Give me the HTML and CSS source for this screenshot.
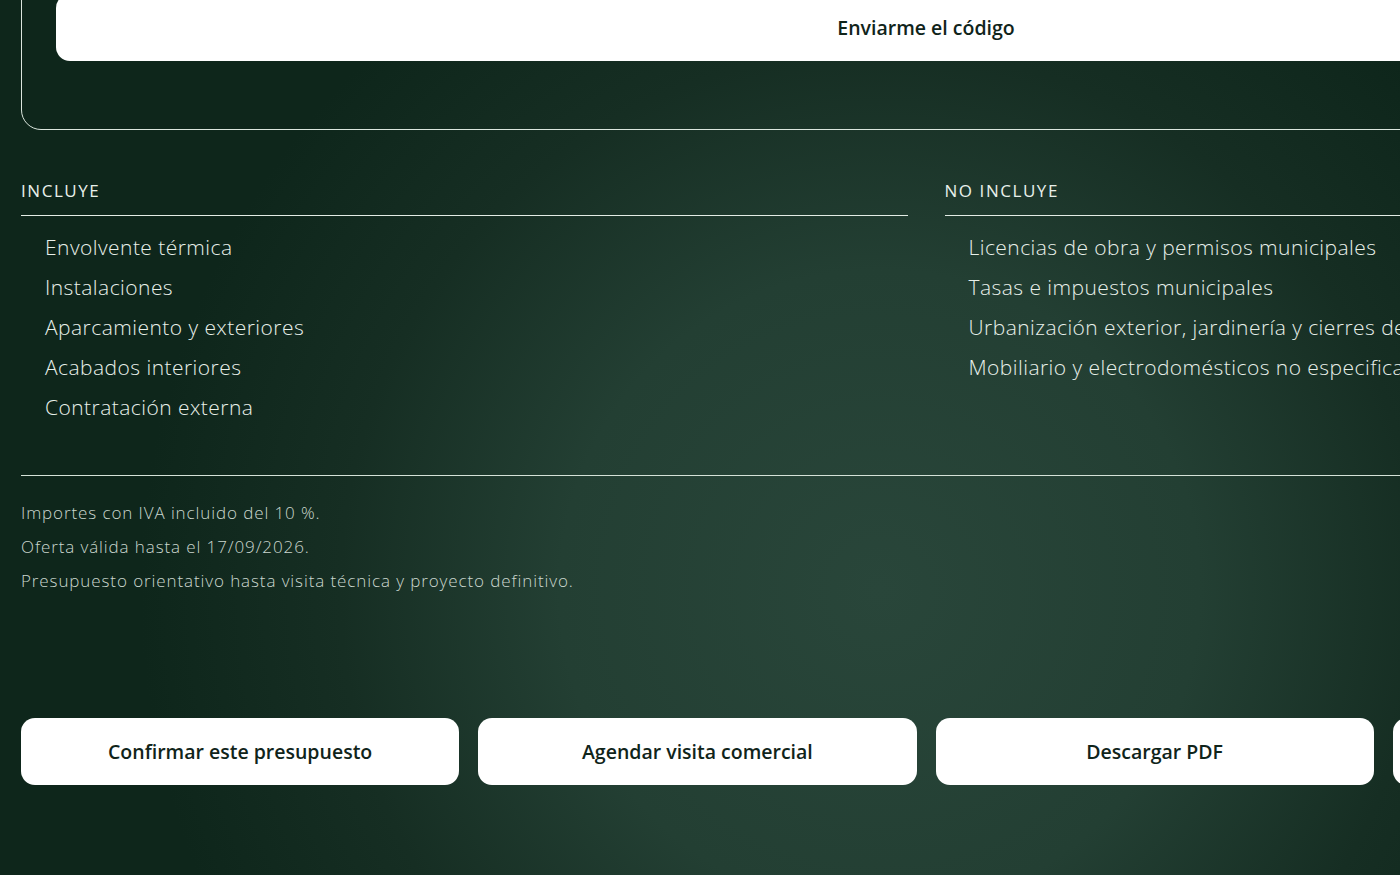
FILE: index.html
```html
<!DOCTYPE html>
<html lang="es">
<head>
<meta charset="utf-8">
<title>Presupuesto</title>
<link rel="stylesheet" href="styles.css">
</head>
<body>
<div class="page">
  <section class="code-box">
    <button class="btn btn-wide">Enviarme el código</button>
  </section>

  <section class="scope">
    <div class="scope-col">
      <h3 class="scope-title">INCLUYE</h3>
      <ul class="scope-list">
        <li>Envolvente térmica</li>
        <li>Instalaciones</li>
        <li>Aparcamiento y exteriores</li>
        <li>Acabados interiores</li>
        <li>Contratación externa</li>
      </ul>
    </div>
    <div class="scope-col">
      <h3 class="scope-title">NO INCLUYE</h3>
      <ul class="scope-list">
        <li>Licencias de obra y permisos municipales</li>
        <li>Tasas e impuestos municipales</li>
        <li>Urbanización exterior, jardinería y cierres de parcela</li>
        <li>Mobiliario y electrodomésticos no especificados</li>
      </ul>
    </div>
  </section>

  <section class="notes">
    <p>Importes con IVA incluido del 10 %.</p>
    <p>Oferta válida hasta el 17/09/2026.</p>
    <p>Presupuesto orientativo hasta visita técnica y proyecto definitivo.</p>
  </section>

  <section class="actions">
    <button class="btn">Confirmar este presupuesto</button>
    <button class="btn">Agendar visita comercial</button>
    <button class="btn">Descargar PDF</button>
    <button class="btn">Compartir</button>
  </section>
</div>
</body>
</html>
```

FILE: styles.css
```css
html, body {
  margin: 0;
  padding: 0;
  height: 100%;
  overflow: hidden;
}

body {
  background-color: #0e261b;
  background-image: radial-gradient(circle at 880px 590px, #29463a 0px, #233f33 320px, #162e23 540px, #0e261b 740px);
  font-family: "Open Sans", "Liberation Sans", sans-serif;
  color: #e8f0ea;
}

.page {
  width: 1810px;
  margin-left: 21px;
  margin-top: -41px;
}

.code-box {
  border: 1px solid #dbe6de;
  border-radius: 20px;
  padding: 34px 34px 68px;
}

.btn {
  display: flex;
  align-items: center;
  justify-content: center;
  height: 67px;
  background: #ffffff;
  border: none;
  border-radius: 14px;
  font-family: "Open Sans", "Liberation Sans", sans-serif;
  font-size: 19.5px;
  font-weight: 600;
  color: #10241a;
  padding: 0;
}

.btn-wide {
  width: 100%;
}

.scope {
  display: grid;
  grid-template-columns: 1fr 1fr;
  column-gap: 37px;
  margin-top: 49px;
  padding-bottom: 48px;
  border-bottom: 1.5px solid #d5e2d8;
}

.scope-title {
  margin: 0;
  font-size: 17px;
  font-weight: 400;
  letter-spacing: 1.55px;
  line-height: 24px;
  padding-bottom: 12px;
  border-bottom: 1.5px solid #e3ece5;
}

.scope-list {
  list-style: none;
  margin: 11px 0 0;
  padding: 0 0 0 24px;
}

.scope-list li {
  font-size: 21px;
  font-weight: 300;
  line-height: 40px;
  white-space: nowrap;
  letter-spacing: 0.45px;
}

.notes {
  padding-top: 20px;
}

.notes p {
  margin: 0;
  font-size: 17px;
  font-weight: 300;
  line-height: 34px;
  letter-spacing: 0.9px;
  color: #cbd7cf;
}

.actions {
  display: grid;
  grid-template-columns: repeat(4, 1fr);
  column-gap: 19px;
  margin-top: 120px;
}
```
